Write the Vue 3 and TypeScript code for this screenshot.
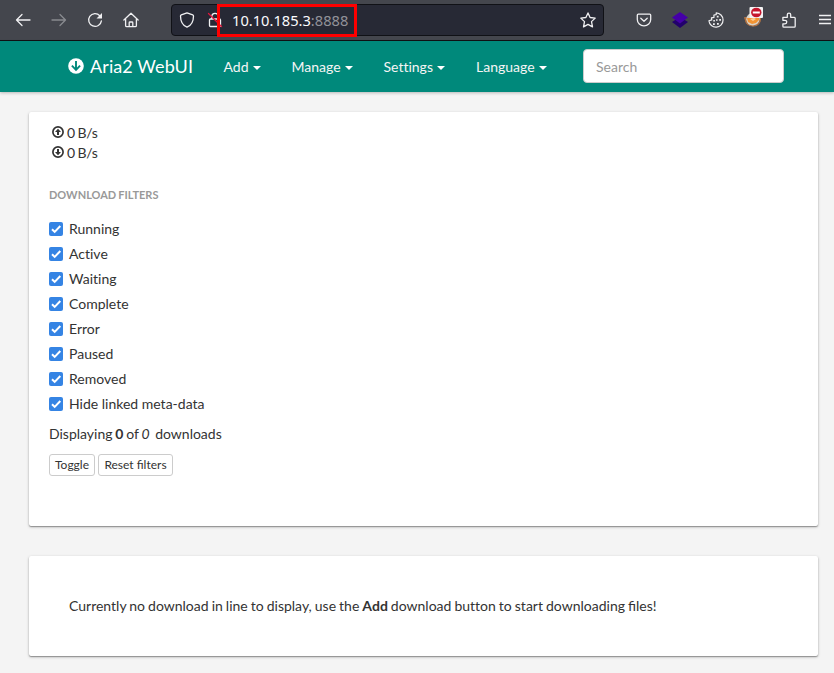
<script setup lang="ts">
import { ref } from 'vue'

interface Filter {
  name: string
  on: boolean
}

const menus: { label: string; cls: string }[] = [
  { label: 'Add', cls: 'm-add' },
  { label: 'Manage', cls: 'm-manage' },
  { label: 'Settings', cls: 'm-settings' },
  { label: 'Language', cls: 'm-language' },
]

const filters = ref<Filter[]>(
  ['Running', 'Active', 'Waiting', 'Complete', 'Error', 'Paused', 'Removed', 'Hide linked meta-data'].map((name) => ({
    name,
    on: true,
  })),
)

const toggleAll = (): void => filters.value.forEach((f) => (f.on = !f.on))
const resetAll = (): void => filters.value.forEach((f) => (f.on = true))
</script>

<template>
  <div class="window">
    <div class="toolbar">
      <div class="nav-icons">
        <svg class="ic" viewBox="0 0 16 16"><path d="M15 8H1.500M7 2.500L1.500 8 7 13.500" /></svg>
        <svg class="ic dim" viewBox="0 0 16 16"><path d="M1 8h13.500M9 2.500L14.500 8 9 13.500" /></svg>
        <svg class="ic" viewBox="0 0 16 16">
          <path d="M12.800 3.700A6.400 6.400 0 1 0 14.400 8.800" />
          <path class="solid" d="M15 1v5.500H9.500z" />
        </svg>
        <svg class="ic" viewBox="0 0 16 16">
          <path d="M.9 8L8 1.300 15.100 8M2.600 7v6.500q0 1.200 1.200 1.200h8.400q1.200 0 1.200-1.200V7M6.200 14.500v-3.700q0-.8.8-.8h2q.8 0 .8.800v3.700" />
        </svg>
      </div>
      <div class="urlbar">
        <svg class="ic" viewBox="0 0 16 16">
          <path d="M8 .9l5.700 2q.8.3.8 1.100C14.500 9 12 13.500 8 15.200 4 13.500 1.500 9 1.500 4q0-.8.8-1.100z" />
        </svg>
        <svg class="ic lock" viewBox="0 0 16 16">
          <path d="M4.800 7V4.500a3.200 3.200 0 0 1 6.400 0V7M3.500 7h9q1 0 1 1v5.500q0 1-1 1h-9q-1 0-1-1V8q0-1 1-1z" />
          <path class="slash" d="M1.500 1.500l13 13" />
        </svg>
        <span class="url">10.10.185.3<span class="port">:8888</span></span>
        <svg class="ic star" viewBox="0 0 16 16">
          <path d="M8 .9l2.100 4.600 5.100.6-3.700 3.500 1 5.300L8 12.400l-4.500 2.500 1-5.300L.8 6.100l5.100-.6z" />
        </svg>
        <div class="marker"></div>
      </div>
      <div class="extensions">
        <svg class="ic" viewBox="0 0 16 16">
          <path d="M2.300 2.200h11.400q1 0 1 1V7.500a6.700 6.300 0 0 1-13.400 0V3.200q0-1 1-1zM4.800 6.300L8 9.300l3.200-3" />
        </svg>
        <svg class="ic" viewBox="0 0 16 16">
          <path class="layer-low" d="M0 10l8-5 8 5-8 6z" />
          <path class="layer-top" d="M0 5.600L8 0l8 5.600-8 5.800z" />
        </svg>
        <svg class="ic cookie" viewBox="0 0 16 16">
          <path d="M8.200.9A7.100 7.100 0 1 1 .9 8.800L3.800 7.900 3.400 5.800 6 5.300 5.900 3 8.200 2.600z" />
          <path class="dots" d="M8.800 3.800h1.800v1.800H8.800zM11.200 7h1.800v1.800h-1.800zM5.300 8h1.600v1.600H5.300zM8 7.200h1.600v1.600H8zM5 11.200h1.800V13H5zM9 11h1.800v1.800H9z" />
        </svg>
        <svg class="fox" viewBox="0 0 20 20">
          <path fill="#a96f44" d="M1 10h4l4-4h8l1 5q0 8-8 8-7 0-8-6z" />
          <circle cx="10" cy="12.500" r="6.800" fill="#d9d3c8" />
          <path fill="#f39432" d="M4 11l3 0 5-2 4 1 0 3-3 3-4 1-4-2z" />
          <path fill="none" stroke="#a96f44" stroke-width="1.200" d="M2 11q1 8 8 8 6 0 7.500-7" />
          <path fill="#fbd09a" d="M7 12l4-1 2 1-3 2z" />
          <rect x="6.500" y="0" width="13.500" height="11" rx="1" fill="#f4f4f4" />
          <ellipse cx="13.300" cy="5.500" rx="5.200" ry="4.800" fill="#c5162e" />
          <rect x="9.800" y="4.500" width="7" height="2" fill="#fff" />
        </svg>
        <svg class="ic" viewBox="0 0 16 16">
          <path d="M1.900 5.300h4.400V2.800a1.700 1.700 0 0 1 3.400 0v2.500h3.600q.9 0 .9.900v8q0 .9-.9.900H2.800q-.9 0-.9-.9v-2.400h2.100a1.700 1.700 0 0 0 0-3.500H1.900z" />
        </svg>
        <svg class="ic burger" viewBox="0 0 16 16"><path d="M2 3.500h12M2 7.500h12M2 11.500h12" /></svg>
      </div>
    </div>

    <nav class="navbar">
      <a class="brand">
        <svg viewBox="0 0 16 16">
          <circle cx="8" cy="8" r="7.800" fill="#fff" />
          <path d="M8 3v9M3.900 7.700L8 11.900l4.100-4.200" fill="none" stroke="#00897b" stroke-width="1.900" />
        </svg>
        <span>Aria2 WebUI</span>
      </a>
      <a v-for="m in menus" :key="m.label" class="menu" :class="m.cls">{{ m.label }}<i class="caret"></i></a>
      <input class="search" type="text" placeholder="Search" />
    </nav>

    <main>
      <section class="card stats">
        <div class="speed">
          <svg viewBox="0 0 12 12">
            <circle cx="6" cy="6" r="5.100" />
            <path d="M6 2.700L9 6H7v3H5V6H3z" />
          </svg>
          <span>0 B/s</span>
        </div>
        <div class="speed">
          <svg viewBox="0 0 12 12">
            <circle cx="6" cy="6" r="5.100" />
            <path d="M6 9.300L9 6H7V3H5v3H3z" />
          </svg>
          <span>0 B/s</span>
        </div>
        <h2>Download filters</h2>
        <label v-for="f in filters" :key="f.name" class="filter">
          <input v-model="f.on" type="checkbox" />
          <svg class="box" viewBox="0 0 14 14"><path d="M3 7.200l2.700 2.700L11.300 4" /></svg>
          <span>{{ f.name }}</span>
        </label>
        <p class="count">Displaying <b>0</b> of <em>0</em>&nbsp; downloads</p>
        <div class="buttons">
          <button class="toggle" @click="toggleAll">Toggle</button>
          <button class="reset" @click="resetAll">Reset filters</button>
        </div>
      </section>
      <section class="card empty">
        Currently no download in line to display, use the <b>Add</b> download button to start downloading <span class="joined">files!</span>
      </section>
    </main>
  </div>
</template>

<style>
body {
  background: #f4f4f4;
}
</style>

<style scoped>
* {
  box-sizing: border-box;
}
.window {
  height: 673px;
  overflow: hidden;
  background: #f4f4f4;
  color: #333;
  font: 14px/20px Lato, sans-serif;
  font-variant-ligatures: none;
}
.toolbar {
  display: flex;
  align-items: center;
  height: 41px;
  background: #44464d;
  border-bottom: 1px solid #101114;
}
.ic {
  width: 16px;
  height: 16px;
  flex: none;
  fill: none;
  stroke: #f0f0f2;
  stroke-width: 1.3;
  stroke-linejoin: round;
  stroke-linecap: round;
}
.dim {
  opacity: 0.4;
}
.solid,
.dots {
  fill: #f0f0f2;
  stroke: none;
}
.nav-icons {
  display: flex;
  gap: 20px;
  width: 171px;
  padding-left: 15px;
}
.urlbar {
  position: relative;
  display: flex;
  align-items: center;
  width: 433px;
  height: 32px;
  padding: 0 7px;
  background: #272935;
  border: 1px solid #101116;
  border-radius: 4px;
}
.lock {
  margin-left: 12px;
}
.slash {
  stroke: #e2143c;
}
.url {
  margin: 0 0 1px 9px;
  color: #fbfbfe;
  font: 14.67px/20px 'Noto Sans', sans-serif;
}
.port {
  color: #929299;
}
.star {
  margin-left: auto;
}
.marker {
  position: absolute;
  left: 45px;
  top: -1px;
  width: 140px;
  height: 33px;
  border: 3px solid #f00;
}
.extensions {
  display: flex;
  align-items: center;
  gap: 20px;
  padding-left: 32px;
}
.cookie {
  stroke-width: 1.2;
}
.layer-low {
  fill: #22006c;
  stroke: none;
}
.layer-top {
  fill: #4500a8;
  stroke: none;
}
.fox {
  flex: none;
  width: 20px;
  height: 20px;
  margin: -6px -2px 0 -1px;
}
.burger {
  stroke-linecap: butt;
}
.navbar {
  display: flex;
  align-items: center;
  height: 51px;
  padding-left: 68px;
  background: #00897b;
  color: #fff;
  box-shadow: 0 1px 3px rgba(0, 0, 0, 0.25);
}
.brand {
  display: flex;
  align-items: center;
  gap: 6px;
  width: 155.5px;
  margin-bottom: 2px;
  font-size: 18px;
  letter-spacing: 0.1px;
  white-space: nowrap;
}
.brand svg {
  width: 16px;
  height: 16px;
}
.menu {
  display: flex;
  align-items: center;
  gap: 4.5px;
  color: #f5f5f5;
}
.m-add {
  width: 68px;
}
.m-manage {
  width: 92px;
}
.m-settings {
  width: 92.5px;
}
.m-language {
  width: 107px;
}
.caret {
  margin-top: 2px;
  border: 4px solid transparent;
  border-top-color: #fff;
  border-bottom: 0;
}
.search {
  width: 201px;
  height: 34px;
  margin-bottom: 1px;
  padding: 0 12px;
  background: #fff;
  border: 1px solid #ccc;
  border-radius: 4px;
  font: 14px/20px Lato, sans-serif;
}
.search::placeholder {
  color: #999;
  opacity: 1;
}
main {
  padding: 20px 16px 0 29px;
}
.card {
  background: #fff;
  border-radius: 2px;
  box-shadow: 0 1px 3px rgba(0, 0, 0, 0.26), 0 1px 1px rgba(0, 0, 0, 0.28);
}
.stats {
  height: 414px;
  padding: 11px 20px 0;
}
.speed {
  display: flex;
  align-items: center;
  gap: 3px;
  height: 20px;
  padding-left: 3px;
  word-spacing: -0.5px;
  letter-spacing: -0.35px;
}
.speed svg {
  width: 12px;
  height: 12px;
  margin-top: -2px;
}
.speed circle {
  fill: none;
  stroke: #333;
  stroke-width: 1.7;
}
.speed path {
  fill: #333;
}
h2 {
  margin: 22px 0 14px;
  color: #999;
  font-size: 11px;
  line-height: 20px;
  font-weight: 700;
  word-spacing: -0.7px;
  text-transform: uppercase;
}
.filter {
  display: flex;
  align-items: center;
  height: 20px;
  margin-bottom: 5px;
}
.filter input {
  position: absolute;
  opacity: 0;
}
.box {
  width: 14px;
  height: 14px;
  margin-right: 6px;
  background: #fff;
  border-radius: 2px;
  box-shadow: inset 0 0 0 1px #999;
}
.box path {
  fill: none;
  stroke: #fff;
  stroke-width: 2;
}
input:checked + .box {
  background: #3584e4;
  box-shadow: none;
}
.count {
  margin: 10px 0 10px;
  word-spacing: -0.8px;
}
.buttons {
  display: flex;
  gap: 3px;
}
button {
  height: 22px;
  padding: 0;
  border: 1px solid #ccc;
  border-radius: 3px;
  background: #fff;
  color: #333;
  font: 12px/18px Lato, sans-serif;
}
.toggle {
  width: 46px;
}
.reset {
  width: 75px;
}
.empty {
  height: 100px;
  margin-top: 30px;
  padding: 40px;
  white-space: nowrap;
  word-spacing: -0.55px;
}
.joined {
  font-variant-ligatures: normal;
}
</style>
